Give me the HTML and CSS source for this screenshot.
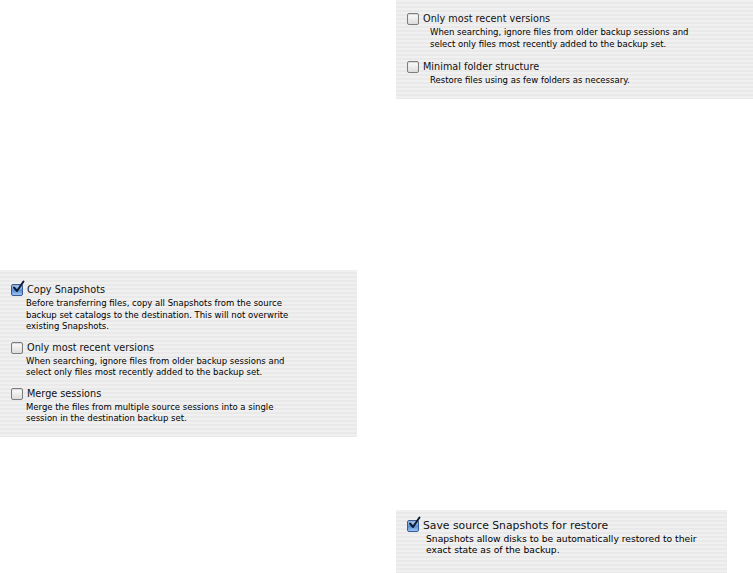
FILE: index.html
```html
<!DOCTYPE html>
<html lang="en">
<head>
    <meta charset="UTF-8">
    <title>Backup options</title>
    <link rel="stylesheet" href="styles.css">
</head>
<body>
<div class="sheet">
    <!-- Left column: copy backup set options -->
    <div class="column">
        <div class="panel panel-copy">
            <div class="option">
                <label class="option-label"><span class="box checked"><svg viewBox="0 0 14 14"><path d="M3 6.5 L6 10 L12.5 0.5"/></svg></span>Copy Snapshots</label>
                <p class="desc">Before transferring files, copy all Snapshots from the source<br>backup set catalogs to the destination. This will not overwrite<br>existing Snapshots.</p>
            </div>
            <div class="option">
                <label class="option-label"><span class="box"></span>Only most recent versions</label>
                <p class="desc">When searching, ignore files from older backup sessions and<br>select only files most recently added to the backup set.</p>
            </div>
            <div class="option">
                <label class="option-label"><span class="box"></span>Merge sessions</label>
                <p class="desc">Merge the files from multiple source sessions into a single<br>session in the destination backup set.</p>
            </div>
        </div>
    </div>

    <!-- Right column: restore options -->
    <div class="column">
        <div class="panel panel-restore">
            <div class="option">
                <label class="option-label"><span class="box"></span>Only most recent versions</label>
                <p class="desc">When searching, ignore files from older backup sessions and<br>select only files most recently added to the backup set.</p>
            </div>
            <div class="option">
                <label class="option-label"><span class="box"></span>Minimal folder structure</label>
                <p class="desc">Restore files using as few folders as necessary.</p>
            </div>
        </div>

        <div class="panel panel-snap">
            <div class="option">
                <label class="option-label"><span class="box checked"><svg viewBox="0 0 14 14"><path d="M3 6.5 L6 10 L12.5 0.5"/></svg></span>Save source Snapshots for restore</label>
                <p class="desc">Snapshots allow disks to be automatically restored to their<br>exact state as of the backup.</p>
            </div>
        </div>
    </div>
</div>
</body>
</html>
```

FILE: styles.css
```css
body {
    margin: 0;
    background-color: #fff;
    color: #111;
    font-family: "DejaVu Sans", Verdana, sans-serif;
}

.sheet {
    display: grid;
    grid-template-columns: 357px 357px;
    column-gap: 39px;
}

/* Aqua pinstripe panel */
.panel {
    background: repeating-linear-gradient(#f0f0f0 0, #f0f0f0 2px, #e9e9e9 2px, #e9e9e9 4px);
    padding: 13px 0 12px 11px;
    display: flex;
    flex-direction: column;
    gap: 8px;
}

.panel-copy {
    margin-top: 270px;
}

.panel-restore {
    padding-top: 12px;
    gap: 10px;
    --desc-indent: 23px;
}

.panel-snap {
    margin-top: 411px;
    width: 320px;
    padding-top: 9px;
    padding-bottom: 17px;
    --desc-indent: 19px;
}

.option-label {
    display: flex;
    align-items: center;
    gap: 4px;
    font-size: 9.7px;
    line-height: 14px;
    white-space: nowrap;
}

.desc {
    margin: 1px 0 0 var(--desc-indent, 15px);
    font-size: 8.5px;
    line-height: 11.5px;
    color: #000;
    white-space: nowrap;
}

.panel-snap .option-label {
    font-size: 10.8px;
}

.panel-snap .desc {
    margin-top: 0;
    font-size: 9.2px;
}

/* checkbox */
.box {
    position: relative;
    flex: none;
    width: 10px;
    height: 10px;
    border: 1px solid #7d7d7d;
    border-radius: 2px;
    background: linear-gradient(#fdfdfd, #dcdcdc);
    box-shadow: inset 0 1px 1px rgba(0, 0, 0, 0.15);
}

.box.checked {
    border-color: #3a5c96;
    background: linear-gradient(#b8d3f2, #5b92dc 55%, #9cc3ef);
}

.box svg {
    position: absolute;
    left: -1px;
    top: -4px;
    width: 14px;
    height: 14px;
    overflow: visible;
}

.box svg path {
    fill: none;
    stroke: #0d1a33;
    stroke-width: 2;
    stroke-linecap: round;
    stroke-linejoin: round;
}
```
